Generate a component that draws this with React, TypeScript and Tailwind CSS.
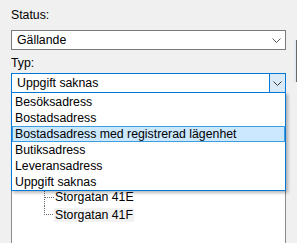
import React from "react";

const options = [
  "Besöksadress",
  "Bostadsadress",
  "Bostadsadress med registrerad lägenhet",
  "Butiksadress",
  "Leveransadress",
  "Uppgift saknas",
];

function Chevron({ color }: { color: string }) {
  return (
    <svg width="9" height="5" viewBox="0 0 9 5" className="block">
      <polyline points="0.5,0.5 4.5,4.5 8.5,0.5" fill="none" stroke={color} strokeWidth="1" />
    </svg>
  );
}

export default function App() {
  return (
    <div className="relative w-[297px] h-[243px] overflow-hidden bg-[#f0f0f0] px-[11px] font-['Liberation_Sans',Arial,sans-serif] text-[12.3px] text-black">
      {/* Status */}
      <div className="pt-[7px] h-[23px] leading-[16px]">Status:</div>
      <div className="mt-[7px] h-[20px] flex items-center justify-between border border-[#7a7a7a] bg-white pl-[5px] pr-[4px]">
        <span className="leading-[16px]">Gällande</span>
        <Chevron color="#5a5a5a" />
      </div>

      {/* Typ */}
      <div className="mt-[5px] h-[16px] leading-[16px]">Typ:</div>
      <div className="relative z-10 mt-[2px] h-[20px] flex items-stretch border border-[#0078d7] bg-white">
        <span className="flex-1 pl-[5px] leading-[18px]">Uppgift saknas</span>
        <div className="w-[16px] flex items-center justify-center border-l border-[#0078d7] bg-[#dbeaf7]">
          <Chevron color="#3a3a3a" />
        </div>

        {/* dropdown list */}
        <div className="absolute left-[-1px] right-[-1px] top-[18px] border border-[#0078d7] bg-white pt-[1px] shadow-[2px_2px_3px_rgba(0,0,0,0.28)]">
          {options.map((o, i) => (
            <div
              key={o}
              className={
                i === 2
                  ? "h-[16px] border border-[#3c9ee0] bg-[#cce8ff] pl-[2px] leading-[14px]"
                  : "h-[16px] pl-[3px] leading-[16px]"
              }
            >
              {o}
            </div>
          ))}
        </div>
      </div>

      {/* tree panel */}
      <div className="mt-[8px] h-[160px] border border-[#8c8c8c] bg-white">
        <div className="ml-[32px] h-[87px] w-[10px] border-l border-dotted border-[#6d6d6d]" />
        <div className="flex h-[17px] items-center">
          <div className="relative ml-[32px] h-full w-[10px] border-l border-dotted border-[#6d6d6d]">
            <div className="absolute left-0 top-[8px] w-[9px] border-t border-dotted border-[#6d6d6d]" />
          </div>
          <span className="px-[1px] leading-[15px]">Storgatan 41E</span>
        </div>
        <div className="flex h-[17px] items-center">
          <div className="relative ml-[32px] h-full w-[10px]">
            <div className="absolute left-0 top-0 h-[9px] border-l border-dotted border-[#6d6d6d]" />
            <div className="absolute left-0 top-[8px] w-[9px] border-t border-dotted border-[#6d6d6d]" />
          </div>
          <span className="bg-[#f2f2f2] px-[1px] leading-[14px]">Storgatan 41F</span>
        </div>
      </div>

      {/* edge of a neighbouring control */}
      <div className="absolute left-[294px] top-[40px] h-[42px] w-[3px] border-r border-[#6a6a6a] bg-[#e2e9f0]" />
    </div>
  );
}
